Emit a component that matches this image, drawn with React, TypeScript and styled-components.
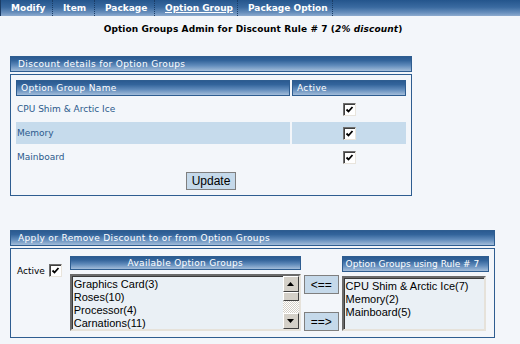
import { Fragment } from "react";
import styled, { createGlobalStyle } from "styled-components";

const GlobalStyle = createGlobalStyle`
  body {
    margin: 0;
    background: #f3f6fa;
    font-family: "DejaVu Sans", Verdana, sans-serif;
  }
`;

const headerGradient = `linear-gradient(to bottom, #2b5b91 0%, #33649b 25%, #5f8aba 60%, #a3bdda 100%)`;

const NavBar = styled.div`
  display: flex;
  height: 16px;
  background: linear-gradient(to bottom, #24558c 0%, #3a6aa0 45%, #6990bd 80%, #8eabcf 100%);
  border-left: 1px solid #1b3d66;
`;

const Tab = styled.a<{ $w: number; $active?: boolean }>`
  width: ${(p) => p.$w}px;
  box-sizing: border-box;
  padding-left: 10px;
  font-size: 9px;
  font-weight: bold;
  line-height: 16px;
  color: #fff;
  border-right: 1px dotted #1b3d66;
  text-decoration: ${(p) => (p.$active ? "underline" : "none")};
`;

const Title = styled.div`
  text-align: center;
  font-size: 9px;
  font-weight: bold;
  letter-spacing: 0.1px;
  color: #000;
  padding: 8px 14px 0 0;
  height: 32px;
  box-sizing: border-box;
  margin-bottom: 8px;

  em {
    font-style: italic;
  }
`;

const Panel = styled.div<{ $w: number }>`
  margin-left: 10px;
  width: ${(p) => p.$w}px;
  display: flex;
  flex-direction: column;
  gap: 2px;
`;

const PanelHeader = styled.div`
  height: 16px;
  box-sizing: border-box;
  border: 1px solid #2e5d90;
  background: ${headerGradient};
  color: #fff;
  font-size: 9px;
  letter-spacing: 0.35px;
  line-height: 14px;
  padding-left: 7px;
`;

const PanelBody = styled.div<{ $h: number }>`
  border: 1px solid #2e5d90;
  height: ${(p) => p.$h}px;
  box-sizing: border-box;
  padding: 5px;
`;

const Grid = styled.div`
  display: grid;
  grid-template-columns: 274px 114px;
  grid-auto-rows: 22px;
  grid-template-rows: 16px;
  gap: 2px;
`;

const ColHead = styled.div`
  box-sizing: border-box;
  border: 1px solid #2e5d90;
  background: ${headerGradient};
  color: #fff;
  font-size: 9px;
  letter-spacing: 0.35px;
  line-height: 14px;
  padding-left: 4px;
`;

const Cell = styled.div<{ $hl?: boolean; $center?: boolean }>`
  display: flex;
  align-items: center;
  justify-content: ${(p) => (p.$center ? "center" : "flex-start")};
  padding-left: ${(p) => (p.$center ? "0" : "1px")};
  background: ${(p) => (p.$hl ? "#c6dbec" : "transparent")};
  color: #2b5a8c;
  font-size: 9px;
`;

const ButtonRow = styled.div`
  grid-column: 1 / span 2;
  display: flex;
  justify-content: center;
  align-items: center;
  height: 22px;
`;

const Button = styled.button<{ $w?: number }>`
  background: #c5d9ea;
  border: 1px solid #7f7f7f;
  font-family: "Liberation Sans", Arial, sans-serif;
  font-size: 12px;
  color: #000;
  padding: 0;
  width: ${(p) => (p.$w ? `${p.$w}px` : "auto")};
  height: 18px;
  line-height: 16px;
`;

const CheckBox = styled.span`
  display: inline-flex;
  width: 13px;
  height: 13px;
  box-sizing: border-box;
  border-top: 1px solid #6f6f6f;
  border-left: 1px solid #6f6f6f;
  border-right: 1px solid #e8e4dc;
  border-bottom: 1px solid #e8e4dc;
  background: #fff;
  box-shadow: inset 1px 1px 0 #404040;
  align-items: center;
  justify-content: center;
`;

const Check = () => (
  <CheckBox>
    <svg width="9" height="9" viewBox="0 0 9 9">
      <path d="M1.5 4.5 L3.5 6.5 L7.5 2" stroke="#000" strokeWidth="1.8" fill="none" />
    </svg>
  </CheckBox>
);

const ApplyRow = styled.div`
  display: flex;
  align-items: flex-start;
  padding-top: 2px;
`;

const ActiveLabel = styled.label`
  display: flex;
  align-items: center;
  gap: 4px;
  font-size: 9px;
  color: #000;
  margin-top: 8px;
  margin-left: 1px;
  width: 53px;
`;

const ListColumn = styled.div<{ $w: number }>`
  width: ${(p) => p.$w}px;
  display: flex;
  flex-direction: column;
  justify-content: flex-end;
  gap: 4px;
  height: 75px;
`;

const ListHead = styled.div<{ $h: number; $center?: boolean }>`
  height: ${(p) => p.$h}px;
  box-sizing: border-box;
  border: 1px solid #2e5d90;
  background: ${headerGradient};
  color: #fff;
  font-size: 9px;
  letter-spacing: ${(p) => (p.$center ? "0.3px" : "0")};
  line-height: ${(p) => p.$h - 2}px;
  text-align: ${(p) => (p.$center ? "center" : "left")};
  padding-left: ${(p) => (p.$center ? "0" : "3px")};
  white-space: nowrap;
  overflow: hidden;
`;

const ListBox = styled.div<{ $w: number }>`
  width: ${(p) => p.$w}px;
  height: 57px;
  box-sizing: border-box;
  border: 2px solid;
  border-color: #6a6a6a #e6e2da #e6e2da #6a6a6a;
  box-shadow: inset 1px 1px 0 #3a3a3a;
  background: #eaf0f5;
  display: flex;
  font-family: "Liberation Sans", Arial, sans-serif;
  font-size: 11px;
  color: #000;
`;

const Options = styled.div`
  flex: 1;
  padding: 2px 0 0 2px;
  line-height: 13px;
  overflow: hidden;
  white-space: nowrap;
`;

const ScrollBar = styled.div`
  width: 16px;
  display: flex;
  flex-direction: column;
  background: repeating-conic-gradient(#d4d0c8 0% 25%, #ffffff 0% 50%) 0 0 / 2px 2px;
`;

const ScrollBtn = styled.div`
  width: 16px;
  height: 16px;
  box-sizing: border-box;
  background: #d4d0c8;
  border: 1px solid;
  border-color: #ffffff #404040 #404040 #ffffff;
  display: flex;
  align-items: center;
  justify-content: center;
`;

const Thumb = styled.div`
  height: 7px;
  background: #d4d0c8;
  border: 1px solid;
  border-color: #ffffff #404040 #404040 #ffffff;
`;

const Spacer = styled.div`
  flex: 1;
`;

const MoveButtons = styled.div`
  display: flex;
  flex-direction: column;
  justify-content: space-between;
  align-items: center;
  width: 41px;
  height: 56px;
  margin-top: 19px;
`;

const MoveButton = styled(Button)`
  width: 35px;
  height: 19px;
`;

const Gap = styled.div`
  height: 34px;
`;

const Arrow = ({ down }: { down?: boolean }) => (
  <svg width="7" height="4" viewBox="0 0 7 4">
    <path d={down ? "M0 0 H7 L3.5 4 Z" : "M0 4 H7 L3.5 0 Z"} fill="#000" />
  </svg>
);

const rows = [
  { name: "CPU Shim & Arctic Ice", hl: false },
  { name: "Memory", hl: true },
  { name: "Mainboard", hl: false },
];

export default function App() {
  return (
    <>
      <GlobalStyle />
      <NavBar>
        <Tab $w={52}>Modify</Tab>
        <Tab $w={42}>Item</Tab>
        <Tab $w={60}>Package</Tab>
        <Tab $w={83} $active>Option Group</Tab>
        <Tab $w={95}>Package Option</Tab>
      </NavBar>
      <Title>
        Option Groups Admin for Discount Rule # 7 (<em>2% discount</em>)
      </Title>

      <Panel $w={402}>
        <PanelHeader>Discount details for Option Groups</PanelHeader>
        <PanelBody $h={122}>
          <Grid>
            <ColHead>Option Group Name</ColHead>
            <ColHead>Active</ColHead>
            {rows.map((r) => (
              <Fragment key={r.name}>
                <Cell $hl={r.hl}>{r.name}</Cell>
                <Cell $hl={r.hl} $center>
                  <Check />
                </Cell>
              </Fragment>
            ))}
            <ButtonRow>
              <Button $w={50}>Update</Button>
            </ButtonRow>
          </Grid>
        </PanelBody>
      </Panel>

      <Gap />

      <Panel $w={485}>
        <PanelHeader>Apply or Remove Discount to or from Option Groups</PanelHeader>
        <PanelBody $h={90}>
          <ApplyRow>
            <ActiveLabel>
              Active <Check />
            </ActiveLabel>
            <ListColumn $w={231}>
              <ListHead $h={15} $center>Available Option Groups</ListHead>
              <ListBox $w={231}>
                <Options>
                  <div>Graphics Card(3)</div>
                  <div>Roses(10)</div>
                  <div>Processor(4)</div>
                  <div>Carnations(11)</div>
                </Options>
                <ScrollBar>
                  <ScrollBtn>
                    <Arrow />
                  </ScrollBtn>
                  <Thumb />
                  <Spacer />
                  <ScrollBtn>
                    <Arrow down />
                  </ScrollBtn>
                </ScrollBar>
              </ListBox>
            </ListColumn>
            <MoveButtons>
              <MoveButton>&lt;==</MoveButton>
              <MoveButton>==&gt;</MoveButton>
            </MoveButtons>
            <ListColumn $w={148}>
              <ListHead $h={17}>Option Groups using Rule # 7</ListHead>
              <ListBox $w={144}>
                <Options>
                  <div>CPU Shim &amp; Arctic Ice(7)</div>
                  <div>Memory(2)</div>
                  <div>Mainboard(5)</div>
                </Options>
              </ListBox>
            </ListColumn>
          </ApplyRow>
        </PanelBody>
      </Panel>
    </>
  );
}
